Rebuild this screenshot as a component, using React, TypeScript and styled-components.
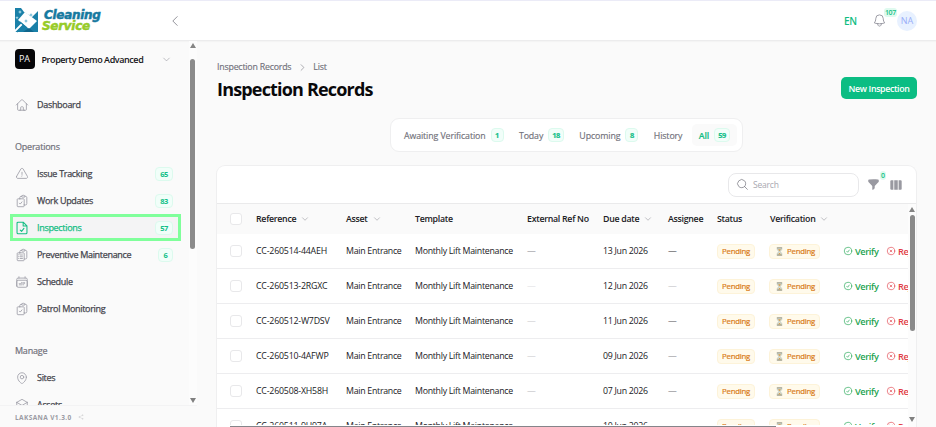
import React from 'react';
import styled, { createGlobalStyle, css } from 'styled-components';
import {
  HiOutlineHome, HiOutlineExclamationTriangle, HiOutlineClipboardDocumentCheck,
  HiOutlineClipboardDocumentList, HiOutlineCalendarDays, HiOutlineMapPin, HiOutlineCube,
  HiOutlineBell, HiOutlineCheckCircle, HiOutlineXCircle, HiFunnel, HiViewColumns,
  HiOutlineMagnifyingGlass, HiOutlineChevronDown, HiOutlineChevronRight, HiOutlineChevronLeft, HiOutlineShare,
} from 'react-icons/hi2';

const GlobalStyle = createGlobalStyle`
  * { box-sizing: border-box; }
  html, body { margin: 0; background: #fafafa; overflow: hidden; }
  body { font-family: "Open Sans", "Noto Sans", sans-serif; font-size: 9px; color: #18181b; }
  svg { flex: none; display: block; }
`;

const Page = styled.div`
  width: 936px; height: 427px; display: flex; flex-direction: column; overflow: hidden; background: #fafafa;
`;
const Header = styled.header`
  height: 41px; flex: none; display: flex; align-items: center; background: #fff;
  border-top: 1px solid #ebebf7; border-bottom: 1px solid #ececed; padding: 0 19px 0 14px;
  box-shadow: 0 1px 1px #00000006;
`;
const Logo = styled.div`display: flex; align-items: center; width: 154px; height: 26px;`;
const Wordmark = styled.div`
  font: italic 700 12px/11px "DejaVu Sans", sans-serif; letter-spacing: -0.3px; color: #16799f;
  margin: 0 0 0 3px; display: flex; flex-direction: column;
  -webkit-text-stroke: 0.5px currentColor;
`;
const WordTop = styled.span`padding-left: 2px;`;
const WordBottom = styled.span`color: #96cb27;`;
const HeaderRight = styled.div`margin-left: auto; display: flex; align-items: center;`;
const Language = styled.span`color: #10bd83; font-weight: 600; font-size: 10px; letter-spacing: -0.2px; margin-right: 15px;`;
const BellBox = styled.div`position: relative; color: #9696a0; margin-right: 10px;`;
const CountBubble = styled.span<{ $x: number; $y: number }>`
  position: absolute; left: ${p => p.$x}px; top: ${p => p.$y}px; padding: 0 1px; height: 9px; line-height: 9px;
  font-size: 7px; font-weight: 600; letter-spacing: -0.4px; color: #12bf84; background: #dffaef; border-radius: 3px;
`;
const Avatar = styled.div`
  width: 20px; height: 20px; border-radius: 50%; background: #e8f1ff; color: #99aef8;
  font-size: 9px; line-height: 20px; text-align: center;
`;

const Body = styled.div`flex: 1; display: flex; min-height: 0;`;
const Sidebar = styled.aside`width: 197px; display: flex; flex-direction: column; flex: none;`;
const SidebarScroll = styled.div`flex: 1; min-height: 0; display: flex; overflow: hidden;`;
const Nav = styled.nav`width: 189px; flex: none; overflow: hidden;`;
const SidebarTrack = styled.div`
  width: 8px; display: flex; flex-direction: column; align-items: center; background: #fcfcfc; padding: 2px 1px 2px 0;
`;
const SideThumb = styled.div`width: 5px; height: 190px; margin-top: 11px; border-radius: 3px; background: #8b8b8b;`;
const Arrow = styled.i<{ $down?: boolean }>`
  width: 0; height: 0; border: 3px solid transparent; flex: none;
  ${p => p.$down
    ? css`border-top: 5px solid #808080; border-bottom: 0; margin-top: auto;`
    : css`border-bottom: 5px solid #858585; border-top: 0;`}
`;
const Property = styled.div`
  height: 20px; margin: 8px 18px 0 14.5px; display: flex; align-items: center; color: #8f8f98;
`;
const PropertyBadge = styled.span`
  width: 20px; height: 20px; border-radius: 4px; background: #060608; color: #f4f4f5;
  text-align: center; line-height: 20px; font-size: 9px;
`;
const PropertyName = styled.span`flex: 1; margin: 1px 0 0 7px; color: #141417; font-size: 9px; font-weight: 600; letter-spacing: -0.42px;`;
const Section = styled.div`
  padding: 0 0 0 15px; margin-top: 15px; height: 27px; line-height: 27px; color: #71717a; font-size: 9px; letter-spacing: -0.22px;
  -webkit-text-stroke: 0.2px currentColor;
`;
const NavItem = styled.div<{ $active?: boolean; $first?: boolean }>`
  height: 27px; margin: ${p => (p.$first ? '22px' : '0')} 8px 0 10px; padding: 0 8px 0 5px;
  display: flex; align-items: center; color: #a1a1aa; font-size: 9px;
  ${p => p.$active && css`border: 3px solid #80ff9b; padding: 0 5px 0 2px; background: #f4f4f5; color: #14bd84;`}
`;
const NavLabel = styled.span<{ $active?: boolean }>`
  flex: 1; margin-left: 8px; letter-spacing: -0.31px; color: ${p => (p.$active ? '#14bd84' : '#45454d')};
  -webkit-text-stroke: 0.25px currentColor;
`;
const Count = styled.span`
  height: 14px; min-width: 13px; padding: 0 3px; border: 1px solid #dcfaee; border-radius: 4px; background: #f1fef9;
  color: #12c088; font-size: 7.5px; font-weight: 700; line-height: 12px; letter-spacing: -0.4px; text-align: center;
`;
const NavCount = styled(Count)`padding: 0 4px; min-width: 15px;`;
const SideFooter = styled.div`
  height: 22px; display: flex; align-items: center; gap: 6px; padding: 1px 0 0 15px; border-top: 1px solid #f3f3f4;
  font-size: 6.5px; font-weight: 700; letter-spacing: 0.4px; color: #9a9aa3;
`;

const Main = styled.main`flex: 1; padding: 17px 19px 0 20px; display: flex; flex-direction: column; min-width: 0;`;
const Crumbs = styled.div`
  display: flex; align-items: center; gap: 6.5px; height: 18px; font-size: 8.8px; letter-spacing: -0.2px; color: #71717a;
  -webkit-text-stroke: 0.15px currentColor;
`;
const TitleRow = styled.div`height: 24px; display: flex; justify-content: space-between; align-items: center; margin-top: 0;`;
const Title = styled.h1`
  margin: 2px 0 0; font-size: 18px; line-height: 24px; font-weight: 700; letter-spacing: -0.82px; color: #09090b;
`;
const PrimaryButton = styled.button`
  width: 76px; height: 22px; border: 0; border-radius: 5px; background: #0bbd83; color: #fff; padding: 1px 0 0; margin-top: 0;
  font: 600 8.8px "Open Sans", sans-serif; letter-spacing: -0.35px;
`;
const Tabs = styled.div`
  width: 353px; height: 34px; margin: 18px 0 13px 173px; padding: 0 5px 0 13px; border: 1px solid #efeff0;
  border-radius: 9px; background: #fff; display: flex; align-items: center; justify-content: space-between;
`;
const Tab = styled.div<{ $active?: boolean }>`
  height: 22px; display: flex; align-items: center; gap: 5px; color: #71717a; font-size: 8.8px; letter-spacing: -0.1px;
  -webkit-text-stroke: 0.15px currentColor;
  ${p => p.$active && css`background: #fafafa; border-radius: 5px; color: #12bd83; font-weight: 600; padding: 0 7px; margin-left: -6px;`}
`;
const TabLabel = styled.span`padding-top: 1px;`;
const Card = styled.section`
  flex: 1; min-height: 0; margin-left: -1px; border: 1px solid #efeff0; border-bottom: 0; border-radius: 9px 9px 0 0; background: #fff;
  display: flex; flex-direction: column; overflow: hidden;
`;
const Toolbar = styled.div`height: 37px; flex: none; display: flex; align-items: center; justify-content: flex-end; padding-right: 13px; color: #9999a1;`;
const Search = styled.div`
  width: 131px; height: 24px; border: 1px solid #e8e8ea; border-radius: 8px; display: flex; align-items: center;
  padding-left: 7px; gap: 4px; color: #a8a8b0; margin-right: 8px; font-size: 8.5px; letter-spacing: -0.2px;
`;
const FilterBox = styled.div`position: relative; margin-right: 9px;`;
const TableArea = styled.div`flex: 1; min-height: 0; display: flex; border-top: 1px solid #eaeaeb;`;
const Table = styled.div`width: 691px; flex: none; overflow: hidden; display: flex; flex-direction: column;`;
const Row = styled.div<{ $head?: boolean }>`
  width: 760px; flex: none; height: ${p => (p.$head ? 30 : 35)}px; display: grid; align-items: center;
  grid-template-columns: 39px 90px 69px 112px 76px 65px 49px 53px 73px 43px 90px;
  background: ${p => (p.$head ? '#fafafa' : '#fff')};
  border-bottom: ${p => (p.$head ? '0' : '1px solid #ededef')};
  font-weight: ${p => (p.$head ? 600 : 400)}; font-size: 8.8px; color: #202024; white-space: nowrap;
`;
const Rows = styled.div`height: 191px; overflow: hidden; display: flex; flex-direction: column;`;
const Checkbox = styled.span`width: 12px; height: 12px; margin-left: 13px; border: 1px solid #e8e8ea; border-radius: 3px; background: #fff;`;
const Cell = styled.span<{ $color?: string }>`
  display: flex; align-items: center; gap: 5px; letter-spacing: -0.28px; color: ${p => p.$color ?? 'inherit'};
`;
const ReferenceCell = styled(Cell)`letter-spacing: -0.2px;`;
const Pill = styled.span`
  height: 15px; justify-self: start; display: flex; align-items: center; gap: 4px; padding: 0 4px; border: 1px solid #fdf3d9; border-radius: 4px;
  background: #fffaeb; color: #d97b17; font-size: 7.8px; letter-spacing: -0.22px; -webkit-text-stroke: 0.2px currentColor;
`;
const VerificationPill = styled(Pill)`padding: 0 4px 0 6px; margin-left: -1px;`;
const Action = styled.span<{ $danger?: boolean }>`
  display: flex; align-items: center; gap: 2px; font-size: 9.2px; font-weight: 600; letter-spacing: -0.38px;
  color: ${p => (p.$danger ? '#e03b45' : '#1ca34f')};
`;
const TableTrack = styled.div`
  width: 8px; padding: 3px 0 5px; background: #fcfcfc; display: flex; flex-direction: column; align-items: center;
`;
const TableThumb = styled.div`width: 5px; height: 116px; margin-top: 3px; border-radius: 3px; background: #8a8a8a;`;
const BottomBar = styled.div`height: 1px; width: 546px; flex: none; margin-left: 13px; background: #85858a; margin-top: auto;`;

const DocumentCheck = () => (
  <svg width="14" height="14" viewBox="0 0 24 24" fill="none" stroke="currentColor" strokeWidth="1.8" strokeLinecap="round" strokeLinejoin="round">
    <path d="M14 2H5.2C4 2 3.5 2.7 3.5 3.7v16.6c0 1 .6 1.7 1.7 1.7h13.6c1.1 0 1.7-.7 1.7-1.7V8.5L14 2Zm0 0v6.5h6.5M9 15.5l2.3 2.2 4-5" />
  </svg>
);
const LogoMark = () => (
  <svg width="25" height="25" viewBox="0 0 25 25">
    <path d="M1 0H7L10 4 18 9 24 3V24H1Z" fill="#1a80a8" />
    <path d="M11 4L23 13 15 21 4 12Z" fill="#fff" />
    <path d="M24 1L15 10M0 24L8 16" stroke="#fff" strokeWidth="1.8" />
    <path d="M3 24L9 18M6 14L13 20" stroke="#1a80a8" strokeWidth="1.1" />
    <path d="M15 20L20 24H9Z" fill="#0f668d" />
    <path d="M12 11l.6 1.4 1.4.6-1.4.6-.6 1.4-.6-1.4-1.4-.6 1.4-.6ZM17 5l.6 1.4L19 7l-1.4.6L17 9l-.6-1.4L15 7l1.4-.6Z" fill="#62b1cf" />
    <path d="M6 2l.6 1.4L8 4l-1.4.6L6 6l-.6-1.4L4 4l1.4-.6ZM3 8l.5 1.2 1.2.5-1.2.5L3 11.4l-.5-1.2-1.2-.5 1.2-.5Z" fill="#b8e2ee" />
  </svg>
);
const Hourglass = () => (
  <svg width="7" height="9" viewBox="0 0 7 9">
    <path d="M1.3 1h4.4v1.5L4.2 4.5l1.5 2V8H1.3V6.5l1.5-2-1.5-2Z" fill="#dbe3dc" stroke="#9caaa5" strokeWidth=".5" />
    <path d="M2 2.3h3L3.5 4.2ZM1.8 7.5 3.5 5.7l1.7 1.8Z" fill="#d39a48" />
    <path d="M.8.8h5.4M.8 8.2h5.4" stroke="#8f8d78" strokeWidth=".8" />
  </svg>
);

const operations = [
  { icon: <HiOutlineExclamationTriangle size={14} />, label: 'Issue Tracking', count: 65 },
  { icon: <HiOutlineClipboardDocumentCheck size={14} />, label: 'Work Updates', count: 83 },
  { icon: <DocumentCheck />, label: 'Inspections', count: 57, active: true },
  { icon: <HiOutlineClipboardDocumentList size={14} />, label: 'Preventive Maintenance', count: 6 },
  { icon: <HiOutlineCalendarDays size={14} />, label: 'Schedule' },
  { icon: <HiOutlineClipboardDocumentCheck size={14} />, label: 'Patrol Monitoring' },
];
const tabs = [
  { label: 'Awaiting Verification', count: 1 }, { label: 'Today', count: 18 },
  { label: 'Upcoming', count: 8 }, { label: 'History' }, { label: 'All', count: 59, active: true },
];
const records = [
  { ref: 'CC-260514-44AEH', due: '13 Jun 2026', ext: '#85858c', who: '#303034' },
  { ref: 'CC-260513-2RGXC', due: '12 Jun 2026', ext: '#dedee1', who: '#bdbdc2' },
  { ref: 'CC-260512-W7DSV', due: '11 Jun 2026', ext: '#c8c8cc', who: '#505055' },
  { ref: 'CC-260510-4AFWP', due: '09 Jun 2026', ext: '#c8c8cc', who: '#85858a' },
  { ref: 'CC-260508-XH58H', due: '07 Jun 2026', ext: '#b9b9be', who: '#707075' },
  { ref: 'CC-260511-9U97A', due: '10 Jun 2026', ext: '#c8c8cc', who: '#85858a' },
];
const Sort = () => <HiOutlineChevronDown size={8} color="#85858d" />;

export default function App() {
  return (
    <Page>
      <GlobalStyle />
      <Header>
        <Logo><LogoMark /><Wordmark><WordTop>Cleaning</WordTop><WordBottom>Service</WordBottom></Wordmark></Logo>
        <HiOutlineChevronLeft size={14} color="#85858d" />
        <HeaderRight>
          <Language>EN</Language>
          <BellBox><HiOutlineBell size={15} /><CountBubble $x={12} $y={-5}>107</CountBubble></BellBox>
          <Avatar>NA</Avatar>
        </HeaderRight>
      </Header>
      <Body>
        <Sidebar>
          <SidebarScroll>
            <Nav>
              <Property><PropertyBadge>PA</PropertyBadge><PropertyName>Property Demo Advanced</PropertyName><HiOutlineChevronDown size={9} /></Property>
              <NavItem $first><HiOutlineHome size={14} /><NavLabel>Dashboard</NavLabel></NavItem>
              <Section>Operations</Section>
              {operations.map(o => (
                <NavItem key={o.label} $active={o.active}>
                  {o.icon}<NavLabel $active={o.active}>{o.label}</NavLabel>{o.count && <NavCount>{o.count}</NavCount>}
                </NavItem>
              ))}
              <Section>Manage</Section>
              <NavItem><HiOutlineMapPin size={14} /><NavLabel>Sites</NavLabel></NavItem>
              <NavItem><HiOutlineCube size={14} /><NavLabel>Assets</NavLabel></NavItem>
            </Nav>
            <SidebarTrack><Arrow /><SideThumb /><Arrow $down /></SidebarTrack>
          </SidebarScroll>
          <SideFooter>LAKSANA V1.3.0 <HiOutlineShare size={6} color="#c8c8cd" /></SideFooter>
        </Sidebar>
        <Main>
          <Crumbs><span>Inspection Records</span><HiOutlineChevronRight size={9} /><span>List</span></Crumbs>
          <TitleRow><Title>Inspection Records</Title><PrimaryButton>New Inspection</PrimaryButton></TitleRow>
          <Tabs>
            {tabs.map(t => (
              <Tab key={t.label} $active={t.active}><TabLabel>{t.label}</TabLabel>{t.count && <Count>{t.count}</Count>}</Tab>
            ))}
          </Tabs>
          <Card>
            <Toolbar>
              <Search><HiOutlineMagnifyingGlass size={13} color="#85858d" />Search</Search>
              <FilterBox><HiFunnel size={13} /><CountBubble $x={13} $y={-7}>0</CountBubble></FilterBox>
              <HiViewColumns size={14} />
            </Toolbar>
            <TableArea>
              <Table>
                <Row $head>
                  <Checkbox /><Cell>Reference<Sort /></Cell><Cell>Asset<Sort /></Cell><Cell>Template</Cell><Cell>External Ref No</Cell>
                  <Cell>Due date<Sort /></Cell><Cell>Assignee</Cell><Cell>Status</Cell><Cell>Verification<Sort /></Cell>
                </Row>
                <Rows>
                  {records.map(r => (
                    <Row key={r.ref}>
                      <Checkbox /><ReferenceCell>{r.ref}</ReferenceCell><Cell>Main Entrance</Cell><Cell>Monthly Lift Maintenance</Cell>
                      <Cell $color={r.ext}>—</Cell><Cell>{r.due}</Cell><Cell $color={r.who}>—</Cell>
                      <Pill>Pending</Pill><VerificationPill><Hourglass />Pending</VerificationPill>
                      <Action><HiOutlineCheckCircle size={10} />Verify</Action>
                      <Action $danger><HiOutlineXCircle size={10} />Reject</Action>
                    </Row>
                  ))}
                </Rows>
                <BottomBar />
              </Table>
              <TableTrack><Arrow /><TableThumb /><Arrow $down /></TableTrack>
            </TableArea>
          </Card>
        </Main>
      </Body>
    </Page>
  );
}
